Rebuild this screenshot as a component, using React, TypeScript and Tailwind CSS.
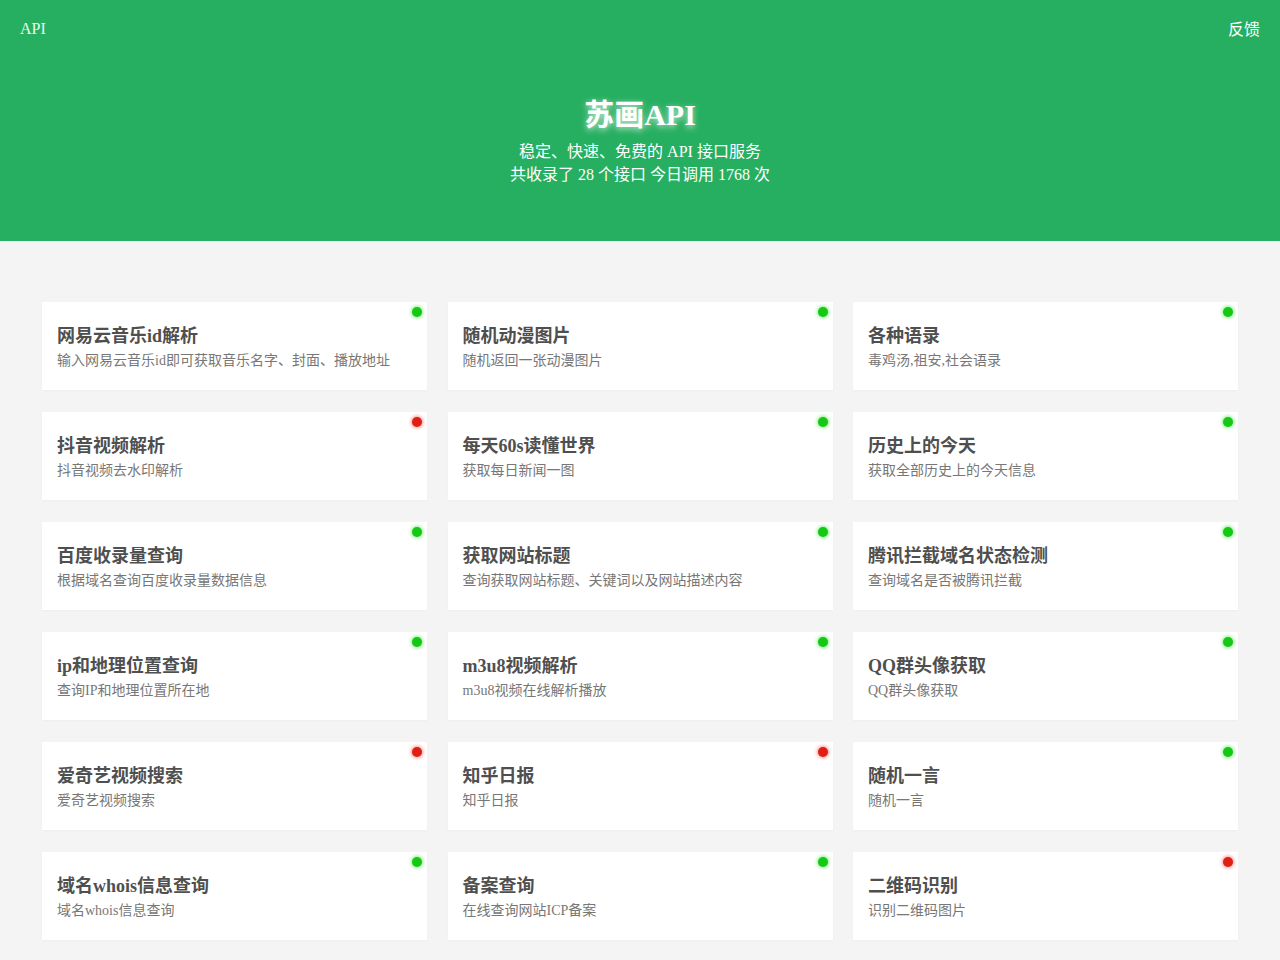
const apis = [
  { title: '网易云音乐id解析', desc: '输入网易云音乐id即可获取音乐名字、封面、播放地址', ok: true },
  { title: '随机动漫图片', desc: '随机返回一张动漫图片', ok: true },
  { title: '各种语录', desc: '毒鸡汤,祖安,社会语录', ok: true },
  { title: '抖音视频解析', desc: '抖音视频去水印解析', ok: false },
  { title: '每天60s读懂世界', desc: '获取每日新闻一图', ok: true },
  { title: '历史上的今天', desc: '获取全部历史上的今天信息', ok: true },
  { title: '百度收录量查询', desc: '根据域名查询百度收录量数据信息', ok: true },
  { title: '获取网站标题', desc: '查询获取网站标题、关键词以及网站描述内容', ok: true },
  { title: '腾讯拦截域名状态检测', desc: '查询域名是否被腾讯拦截', ok: true },
  { title: 'ip和地理位置查询', desc: '查询IP和地理位置所在地', ok: true },
  { title: 'm3u8视频解析', desc: 'm3u8视频在线解析播放', ok: true },
  { title: 'QQ群头像获取', desc: 'QQ群头像获取', ok: true },
  { title: '爱奇艺视频搜索', desc: '爱奇艺视频搜索', ok: false },
  { title: '知乎日报', desc: '知乎日报', ok: false },
  { title: '随机一言', desc: '随机一言', ok: true },
  { title: '域名whois信息查询', desc: '域名whois信息查询', ok: true },
  { title: '备案查询', desc: '在线查询网站ICP备案', ok: true },
  { title: '二维码识别', desc: '识别二维码图片', ok: false },
];

export default function App() {
  return (
    <div className="min-h-[960px] bg-[#f4f4f4] font-['Liberation_Serif','Noto_Sans_CJK_SC',serif]">
      {/* header */}
      <header className="h-[241px] bg-[#27af61] text-white">
        <div className="flex h-[57px] items-center justify-between px-5 text-base">
          <a className="text-[#eafaf0]">API</a>
          <a className="pt-[2px]">反馈</a>
        </div>
        <div className="flex flex-col items-center pt-[40px]">
          <h1 className="text-[30px] leading-[36px] font-bold [text-shadow:0_2px_6px_rgba(255,255,255,0.75)]">苏画API</h1>
          <p className="mt-[7px] text-base leading-[23px]">稳定、快速、免费的 API 接口服务</p>
          <p className="text-base leading-[23px]">共收录了 28 个接口 今日调用 1768 次</p>
        </div>
      </header>

      {/* api list */}
      <main className="grid grid-cols-3 gap-x-[20.5px] gap-y-[22px] px-[42px] pt-[61px] pb-5">
        {apis.map((item, index) => (
          <div key={index} className="relative h-[88px] bg-white px-[15px] pt-[22px] shadow-[0_1px_2px_rgba(0,0,0,0.03)]">
            <span
              className={
                item.ok
                  ? 'absolute top-[5px] right-[5px] h-[10px] w-[10px] rounded-full bg-[#14c814] shadow-[0_0_4px_#3be03b]'
                  : 'absolute top-[5px] right-[5px] h-[10px] w-[10px] rounded-full bg-[#e01e14] shadow-[0_0_4px_#f04a40]'
              }
            />
            <h3 className="text-lg leading-6 font-bold text-[#4f4f4f]">{item.title}</h3>
            <p className="mt-[3px] text-sm leading-5 text-[#777]">{item.desc}</p>
          </div>
        ))}
      </main>
    </div>
  );
}
